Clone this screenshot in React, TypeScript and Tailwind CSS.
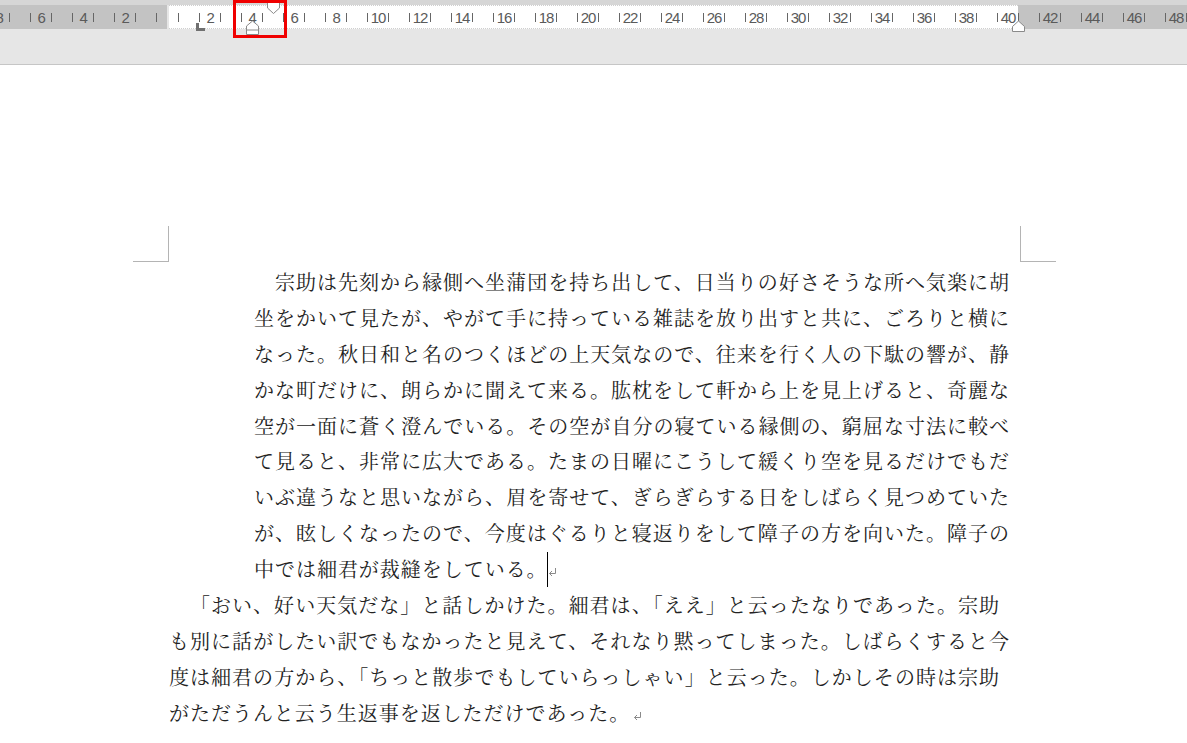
const LEFT = ["8", "", "6", "", "4", "", "2", ""];
const MAIN_CELLS = ["", "2", "", "4", "", "6", "", "8", "", "10", "", "12", "", "14", "", "16", "", "18", "", "20", "", "22", "", "24", "", "26", "", "28", "", "30", "", "32", "", "34", "", "36", "", "38", "", "40"];
const RIGHT = ["", "42", "", "44", "", "46", "", "48", ""];

function Cell({ label }: { label: string }) {
  return (
    <div className="flex h-full w-[21px] shrink-0 items-center">
      <div className="h-[9px] w-px shrink-0 bg-[#666666]" />
      <div className="flex-1 text-center text-[15px] leading-none tracking-[-1.2px] text-[#5a5a5a]">{label}</div>
    </div>
  );
}

function Tick() {
  return <div className="h-[9px] w-px shrink-0 self-center bg-[#666666]" />;
}

function ReturnMark() {
  return (
    <svg width="9" height="10" viewBox="0 0 9 10" className="inline-block shrink-0" fill="none" stroke="#8a8a8a" strokeWidth="1">
      <path d="M7.5 1v5.5H1.5" />
      <path d="M4 4L1.5 6.5L4 9" />
    </svg>
  );
}

const P1 = [
  "宗助は先刻から縁側へ坐蒲団を持ち出して、日当りの好さそうな所へ気楽に胡",
  "坐をかいて見たが、やがて手に持っている雑誌を放り出すと共に、ごろりと横に",
  "なった。秋日和と名のつくほどの上天気なので、往来を行く人の下駄の響が、静",
  "かな町だけに、朗らかに聞えて来る。肱枕をして軒から上を見上げると、奇麗な",
  "空が一面に蒼く澄んでいる。その空が自分の寝ている縁側の、窮屈な寸法に較べ",
  "て見ると、非常に広大である。たまの日曜にこうして緩くり空を見るだけでもだ",
  "いぶ違うなと思いながら、眉を寄せて、ぎらぎらする日をしばらく見つめていた",
  "が、眩しくなったので、今度はぐるりと寝返りをして障子の方を向いた。障子の",
];

export default function App() {
  return (
    <div
      className="flex h-[743px] w-[1187px] flex-col overflow-hidden bg-white"
      style={{ fontFamily: '"Noto Serif CJK JP", "Noto Sans CJK JP", serif' }}
    >
      <div className="relative flex h-[65px] shrink-0 flex-col border-b border-[#c6c6c6] bg-[#e6e6e6]" style={{ fontFamily: '"Liberation Sans", sans-serif' }}>
        <div className="h-[5px] shrink-0 bg-[#d6d6d6]" />
        <div className="flex h-[24px] shrink-0">
          <div className="flex w-[167px] shrink-0 justify-end overflow-hidden bg-[#c3c3c3] pr-[10px]">
            {LEFT.map((l, i) => <Cell key={i} label={l} />)}
            <Tick />
          </div>
          <div className="ml-[2px] flex w-[849px] shrink-0 border-y border-dotted border-[#cfcfcf] bg-white pl-[9px]">
            {MAIN_CELLS.map((l, i) => <Cell key={i} label={l} />)}
          </div>
          <div className="flex flex-1 overflow-hidden bg-[#c3c3c3]">
            {RIGHT.map((l, i) => <Cell key={i} label={l} />)}
          </div>
        </div>
        {/* tab stop */}
        <div className="absolute left-[196px] top-[23px] h-[8px] w-[9px] border-b-[3px] border-l-[3px] border-[#707070]" />
        {/* first-line indent */}
        <svg className="absolute left-[266px] top-0" width="15" height="15" viewBox="0 0 15 15">
          <path d="M1.5 1.5V8L7.5 13.5L13.5 8V1.5" fill="#ffffff" stroke="#8a8a8a" />
        </svg>
        {/* hanging indent */}
        <svg className="absolute left-[245px] top-[20px]" width="15" height="15" viewBox="0 0 15 15">
          <path d="M1.5 14.5V6L7.5 1L13.5 6V14.5Z" fill="#ffffff" stroke="#8a8a8a" />
          <path d="M1.5 10H13.5" stroke="#8a8a8a" />
        </svg>
        {/* right indent */}
        <svg className="absolute left-[1011px] top-[20px]" width="15" height="13" viewBox="0 0 15 13">
          <path d="M1.5 11.5V6.5L7.5 1L13.5 6.5V11.5Z" fill="#ffffff" stroke="#8a8a8a" />
        </svg>
        {/* red highlight */}
        <div className="absolute left-[233px] top-0 h-[38px] w-[54px] border-[3px] border-[#f00000]" />
      </div>

      <div className="flex flex-1 flex-col pt-[161px] text-[20px] leading-[35.9px] text-[#222222]">
        <div className="ml-[133px] flex w-[923px] justify-between">
          <div className="h-[36px] w-[36px] border-b border-r border-[#b4b4b4]" />
          <div className="h-[36px] w-[36px] border-b border-l border-[#b4b4b4]" />
        </div>

        <div className="ml-[254px] mt-[2px] w-[755px]">
          {P1.map((t, i) => (
            <div key={i} className={`h-[35.9px] [text-align-last:justify] ${i === 0 ? "pl-[21px]" : ""}`}>{t}</div>
          ))}
          <div className="flex h-[35.9px] items-center tracking-[0.97px]">
            <span>中では細君が裁縫をしている。</span>
            <span className="ml-[-1px] h-[35px] w-px shrink-0 bg-black" />
            <span className="mt-[6px] flex"><ReturnMark /></span>
          </div>
        </div>

        <div className="ml-[169px] w-[840px]">
          <div className="h-[35.9px] w-[830px] pl-[21px] [text-align-last:justify]">「おい、好い天気だな」と話しかけた。細君は、「ええ」と云ったなりであった。宗助</div>
          <div className="h-[35.9px] [text-align-last:justify]">も別に話がしたい訳でもなかったと見えて、それなり黙ってしまった。しばらくすると今</div>
          <div className="h-[35.9px] w-[830px] [text-align-last:justify]">度は細君の方から、「ちっと散歩でもしていらっしゃい」と云った。しかしその時は宗助</div>
          <div className="flex h-[35.9px] items-center tracking-[0.97px]">
            <span>がただうんと云う生返事を返しただけであった。</span>
            <span className="ml-[3px] mt-[6px] flex"><ReturnMark /></span>
          </div>
        </div>
      </div>
    </div>
  );
}
